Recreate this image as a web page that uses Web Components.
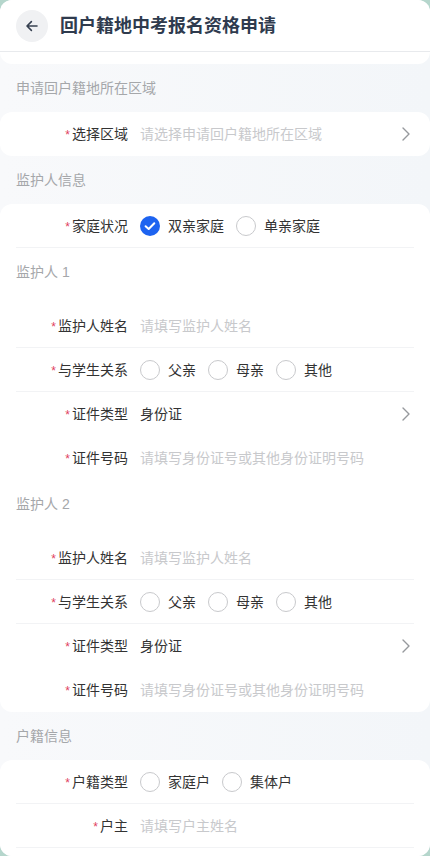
<!DOCTYPE html>
<html lang="zh">
<head>
<meta charset="utf-8">
<style>
  html,body{margin:0;height:100%;background:#b5d6cc;overflow:hidden}
  body{font-family:"Liberation Sans","Noto Sans CJK SC",sans-serif}
</style>
</head>
<body>
<form-page>
  <page-header slot="head" title="回户籍地中考报名资格申请"></page-header>

  <form-section title="申请回户籍地所在区域">
    <form-row label="选择区域" holder="请选择申请回户籍地所在区域" plain>
      <row-arrow slot="end"></row-arrow>
    </form-row>
  </form-section>

  <form-section title="监护人信息">
    <form-row label="家庭状况"><radio-group options="双亲家庭,单亲家庭" checked="0"></radio-group></form-row>
    <sub-title>监护人 1</sub-title>
    <form-row label="监护人姓名" holder="请填写监护人姓名"></form-row>
    <form-row label="与学生关系"><radio-group options="父亲,母亲,其他"></radio-group></form-row>
    <form-row label="证件类型" value="身份证" plain><row-arrow slot="end"></row-arrow></form-row>
    <form-row label="证件号码" holder="请填写身份证号或其他身份证明号码" plain></form-row>
    <sub-title>监护人 2</sub-title>
    <form-row label="监护人姓名" holder="请填写监护人姓名"></form-row>
    <form-row label="与学生关系"><radio-group options="父亲,母亲,其他"></radio-group></form-row>
    <form-row label="证件类型" value="身份证" plain><row-arrow slot="end"></row-arrow></form-row>
    <form-row label="证件号码" holder="请填写身份证号或其他身份证明号码" plain></form-row>
  </form-section>

  <form-section title="户籍信息">
    <form-row label="户籍类型"><radio-group options="家庭户,集体户"></radio-group></form-row>
    <form-row label="户主" holder="请填写户主姓名"></form-row>
  </form-section>
</form-page>

<script>
class FormPage extends HTMLElement{
  constructor(){
    super();
    this.attachShadow({mode:"open"}).innerHTML = `
      <style>
        :host{display:block;height:856px;overflow:hidden;border-radius:12px;background:linear-gradient(90deg,#f8f9fb,#f3f6f9)}
        .gap{height:12px;background:#fff;border-radius:0 0 12px 12px}
      </style>
      <slot name="head"></slot>
      <div class="gap"></div>
      <slot></slot>`;
  }
}
customElements.define("form-page", FormPage);

class PageHeader extends HTMLElement{
  connectedCallback(){
    this.attachShadow({mode:"open"}).innerHTML = `
      <style>
        :host{display:flex;align-items:center;gap:12px;height:51px;padding:0 16px;background:#fff;border-bottom:1px solid #e8eaed}
        .back{width:32px;height:32px;border-radius:50%;background:#f0f1f3;display:flex;align-items:center;justify-content:center}
        h1{margin:0;font-size:18px;line-height:26px;font-weight:700;color:#2f3b4e}
      </style>
      <div class="back"><svg width="14" height="14" viewBox="0 0 14 14" fill="none" stroke="#374151" stroke-width="1.6" stroke-linecap="round" stroke-linejoin="round"><path d="M12 7H2.2M6.4 2.6 2 7l4.4 4.4"/></svg></div>
      <h1>${this.getAttribute("title")}</h1>`;
  }
}
customElements.define("page-header", PageHeader);

class FormSection extends HTMLElement{
  connectedCallback(){
    this.attachShadow({mode:"open"}).innerHTML = `
      <style>
        :host{display:block}
        :host(:last-child) .card{padding-bottom:24px}
        h2{margin:0;padding:0 16px;height:48px;line-height:48px;font-size:14px;font-weight:400;color:#a5a7aa}
        .card{background:#fff;border-radius:12px}
      </style>
      <h2>${this.getAttribute("title")}</h2>
      <div class="card"><slot></slot></div>`;
  }
}
customElements.define("form-section", FormSection);

class FormRow extends HTMLElement{
  connectedCallback(){
    const holder = this.getAttribute("holder");
    const value = this.getAttribute("value");
    this.attachShadow({mode:"open"}).innerHTML = `
      <style>
        :host{display:block;padding:0 16px}
        .row{display:flex;align-items:center;box-sizing:border-box;height:44px;padding-top:1px;border-bottom:1px solid #f2f3f5;font-size:14px;line-height:20px;color:#333}
        :host([plain]) .row{border-bottom-color:transparent}
        label{flex:none;width:112px;text-align:right;margin-right:12px;white-space:nowrap}
        label i{font-style:normal;font-size:12px;color:#e0405e;margin-right:2px}
        .body{flex:1;display:flex;align-items:center;min-width:0}
        .ph{color:#c8c9cc}
      </style>
      <div class="row">
        <label><i>*</i>${this.getAttribute("label")}</label>
        <div class="body">
          ${holder ? `<span class="ph">${holder}</span>` : ""}
          ${value ? `<span>${value}</span>` : ""}
          <slot></slot>
        </div>
        <slot name="end"></slot>
      </div>`;
  }
}
customElements.define("form-row", FormRow);

class SubTitle extends HTMLElement{
  constructor(){
    super();
    this.attachShadow({mode:"open"}).innerHTML = `
      <style>
        :host{display:block;padding:0 16px;height:56px;line-height:48px;font-size:14px;color:#a5a7aa}
      </style>
      <slot></slot>`;
  }
}
customElements.define("sub-title", SubTitle);

class RowArrow extends HTMLElement{
  constructor(){
    super();
    this.attachShadow({mode:"open"}).innerHTML = `
      <style>:host{display:flex;width:10px;height:16px;margin-right:4px}</style>
      <svg width="10" height="16" viewBox="0 0 10 16" fill="none" stroke="#96999d" stroke-width="1.4" stroke-linecap="round" stroke-linejoin="round"><path d="M3 2l6 6-6 6"/></svg>`;
  }
}
customElements.define("row-arrow", RowArrow);

class RadioGroup extends HTMLElement{
  connectedCallback(){
    const checked = this.getAttribute("checked");
    const items = this.getAttribute("options").split(",").map((o,i)=>{
      const on = String(i) === checked;
      return `<span class="opt"><span class="dot${on?" on":""}">${on?'<svg width="20" height="20" viewBox="0 0 20 20" fill="none" stroke="#fff" stroke-width="2" stroke-linecap="round" stroke-linejoin="round"><path d="M5.6 10.2 8.7 13l5.6-5.8"/></svg>':""}</span>${o}</span>`;
    }).join("");
    this.attachShadow({mode:"open"}).innerHTML = `
      <style>
        :host{display:flex;gap:12px}
        .opt{display:flex;align-items:center;gap:8px;font-size:14px;color:#333}
        .dot{width:20px;height:20px;box-sizing:border-box;border-radius:50%;border:1px solid #c8c9cc;background:#fff;display:block}
        .dot.on{background:#1d63f0;border:0}
        svg{display:block}
      </style>
      ${items}`;
  }
}
customElements.define("radio-group", RadioGroup);
</script>
</body>
</html>
